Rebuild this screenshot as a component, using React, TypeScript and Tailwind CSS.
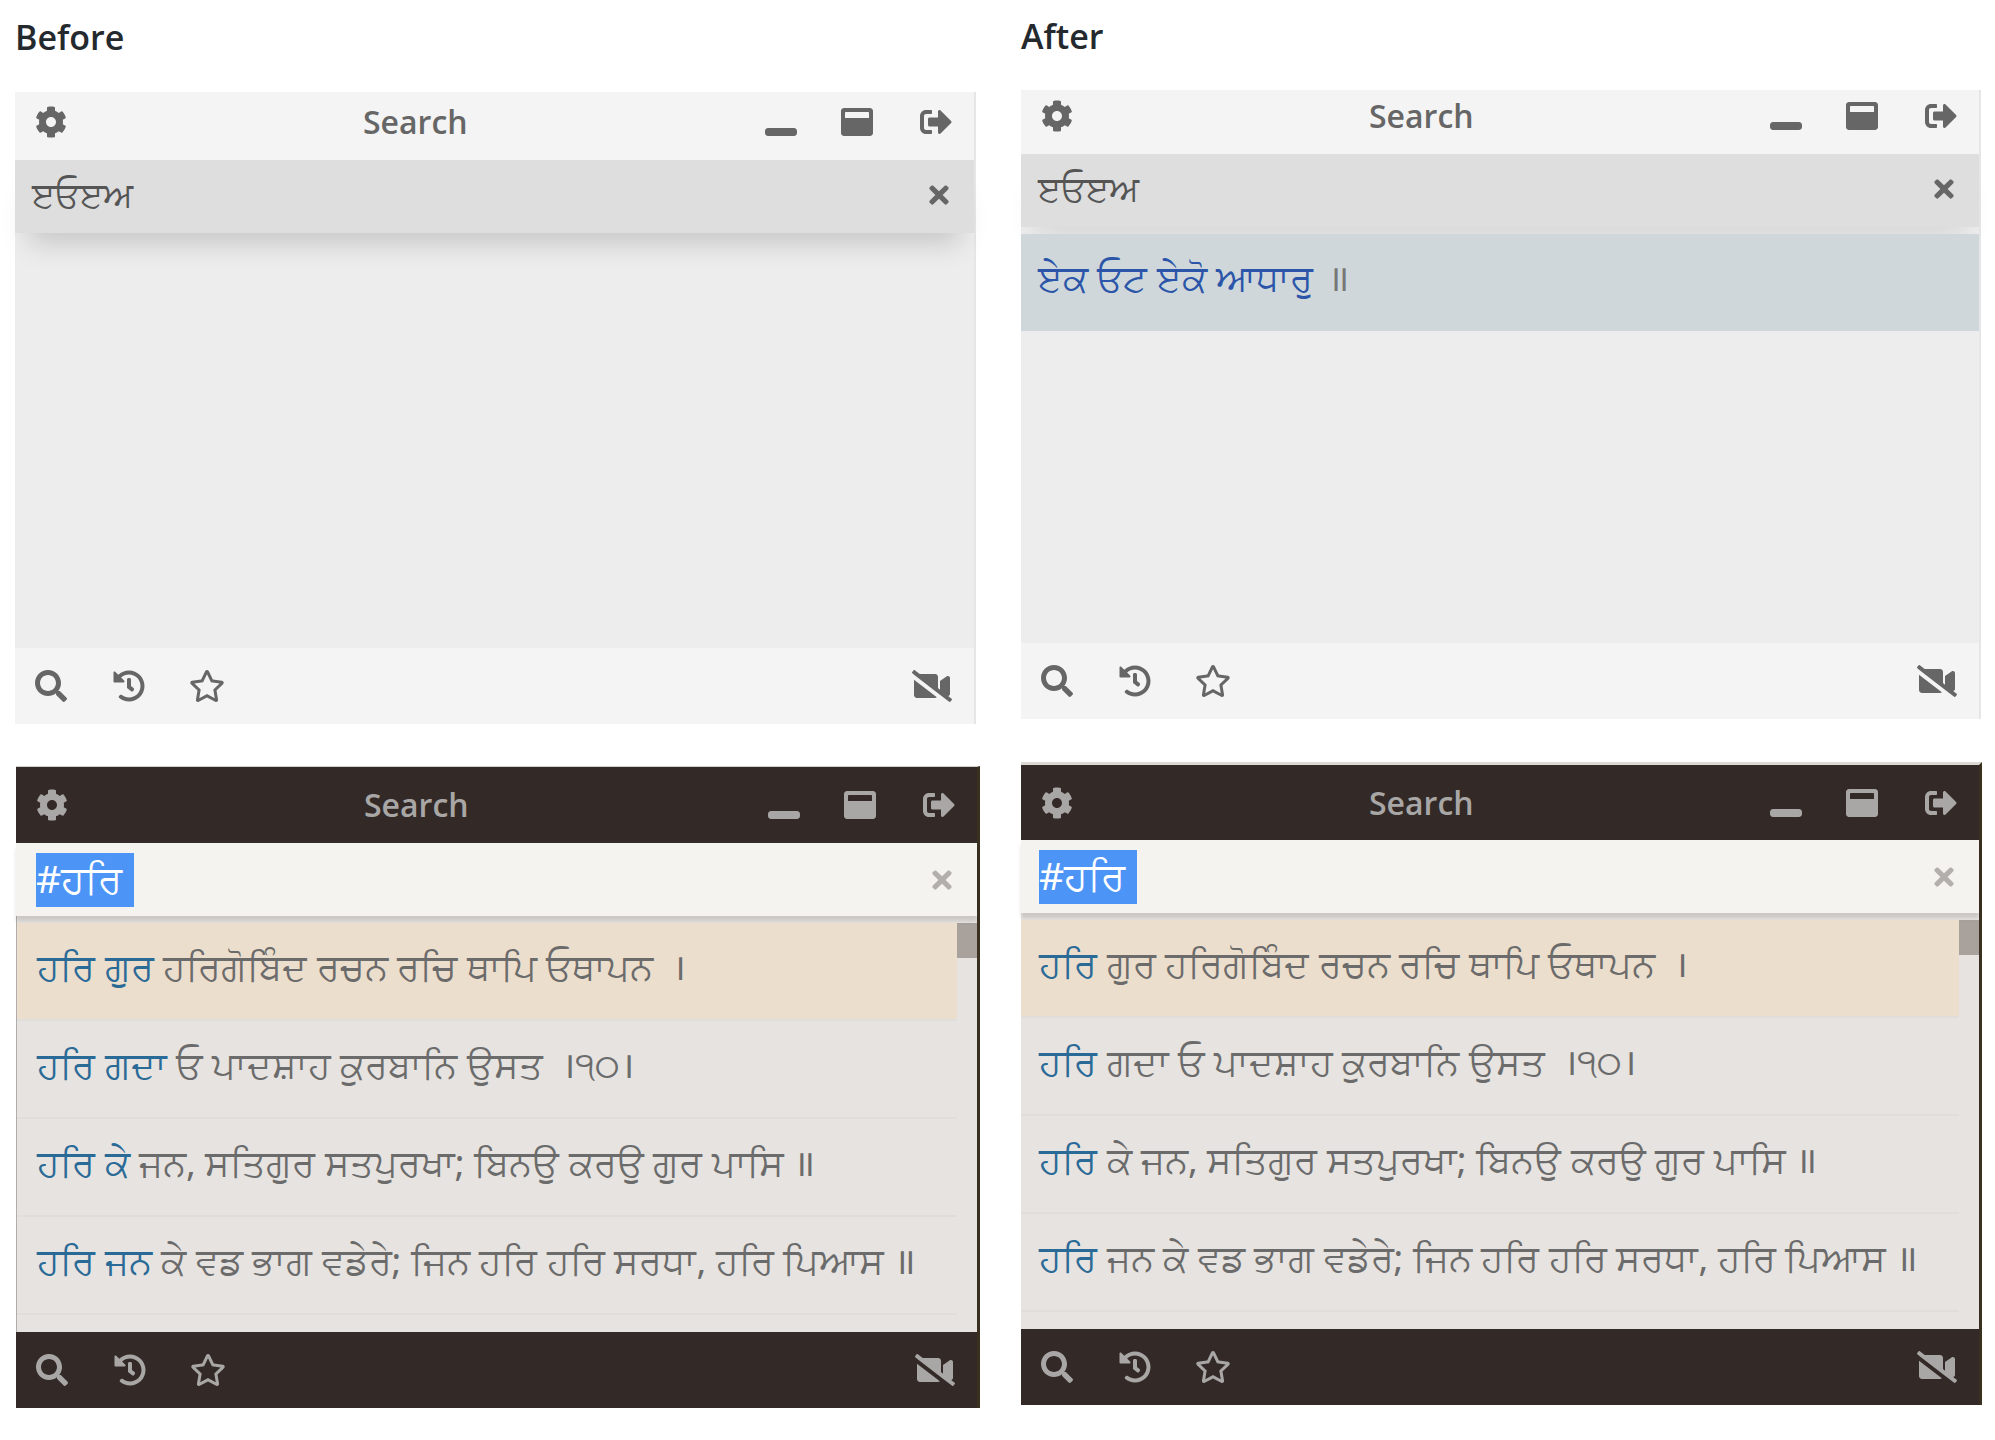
import { ReactNode } from "react";
import {
  FaCog,
  FaWindowMinimize,
  FaWindowMaximize,
  FaSignOutAlt,
  FaTimes,
  FaSearch,
  FaHistory,
  FaRegStar,
  FaVideoSlash,
} from "react-icons/fa";

const darkRows = [
  { hitBefore: "ਹਰਿ ਗੁਰ", hitAfter: "ਹਰਿ", word: " ਗੁਰ", rest: " ਹਰਿਗੋਬਿੰਦ ਰਚਨ ਰਚਿ ਥਾਪਿ ਓਥਾਪਨ  ।" },
  { hitBefore: "ਹਰਿ ਗਦਾ", hitAfter: "ਹਰਿ", word: " ਗਦਾ", rest: " ਓ ਪਾਦਸ਼ਾਹ ਕੁਰਬਾਨਿ ਉਸਤ  ।੧੦।" },
  { hitBefore: "ਹਰਿ ਕੇ", hitAfter: "ਹਰਿ", word: " ਕੇ", rest: " ਜਨ, ਸਤਿਗੁਰ ਸਤਪੁਰਖਾ; ਬਿਨਉ ਕਰਉ ਗੁਰ ਪਾਸਿ ॥" },
  { hitBefore: "ਹਰਿ ਜਨ", hitAfter: "ਹਰਿ", word: " ਜਨ", rest: " ਕੇ ਵਡ ਭਾਗ ਵਡੇਰੇ; ਜਿਨ ਹਰਿ ਹਰਿ ਸਰਧਾ, ਹਰਿ ਪਿਆਸ ॥" },
];

function Bar({ className, children }: { className: string; children: ReactNode }) {
  return <div className={`flex items-center pl-5 pr-[22px] ${className}`}>{children}</div>;
}

function TitleBar({ height, tone }: { height: string; tone: string }) {
  return (
    <Bar className={`${height} ${tone}`}>
      <FaCog className="w-8 h-8" />
      <span className="ml-[296px] text-[32px] leading-none font-semibold font-['Open_Sans',sans-serif]">Search</span>
      <div className="ml-auto flex items-center gap-11">
        <FaWindowMinimize className="w-8 h-8" />
        <FaWindowMaximize className="w-8 h-8" />
        <FaSignOutAlt className="w-8 h-8 ml-[3px]" />
      </div>
    </Bar>
  );
}

function FootBar({ dark }: { dark?: boolean }) {
  return (
    <Bar className={`h-[76px] ${dark ? "bg-[#332a28] text-[#a9a7a6]" : "bg-[#f4f4f4] text-[#666666]"}`}>
      <div className="flex items-center gap-[46px]">
        <FaSearch className="w-8 h-8" />
        <FaHistory className="w-8 h-8" />
        <FaRegStar className="w-9 h-8 -ml-[2px]" />
      </div>
      <FaVideoSlash className="ml-auto w-10 h-8" />
    </Bar>
  );
}

function LightPanel({ after }: { after?: boolean }) {
  return (
    <div className={`flex flex-col border-r-2 border-[#e6e6e6] ${after ? "w-[960px]" : "w-[961px]"}`}>
      <TitleBar
        height={after ? "h-[64px]" : "h-[68px]"}
        tone={after ? "bg-[#f4f4f4] text-[#666666] pb-[12px]" : "bg-[#f4f4f4] text-[#666666] pb-[9px]"}
      />
      <div
        className={`relative z-10 h-[73px] bg-[#dedede] flex items-center justify-between pl-[17px] pr-[22px] pb-[3px] text-[#555555] ${after ? "shadow-[0_24px_28px_-14px_rgba(0,0,0,0.1)]" : "shadow-[0_24px_28px_-14px_rgba(0,0,0,0.17)]"}`}
      >
        <span className="mb-[3px] text-[34.5px] leading-[50px] font-['Noto_Sans',sans-serif]">ੲਓੲਅ</span>
        <FaTimes className="w-[26px] h-7 text-[#666666]" />
      </div>
      <div className={`${after ? "h-[416px]" : "h-[415px]"} bg-[#ededed] pt-[7px]`}>
        {after && (
          <div className="relative z-20 h-[97px] bg-[#cfd7db] flex items-center pl-[17px] pb-[10px] text-[36.5px] text-[#2a55a8] font-['Noto_Sans',sans-serif]">
            ਏਕ ਓਟ ਏਕੋ ਆਧਾਰੁ <span className="ml-[14px] text-[#777777]">॥</span>
          </div>
        )}
      </div>
      <FootBar />
    </div>
  );
}

function DarkPanel({ after }: { after?: boolean }) {
  return (
    <div
      className={`flex flex-col border-r-[3px] border-[#3a3020] ${after ? "w-[961px] border-t-[3px] border-t-[#dcd9d5]" : "w-[964px] ml-px border-t border-t-[#cfcfcf]"}`}
    >
      <TitleBar height={after ? "h-[75px]" : "h-[76px]"} tone="bg-[#332a28] text-[#a9a7a6]" />
      <div
        className={`relative z-10 h-[73px] bg-[#f5f3ef] flex items-center justify-between pr-[22px] text-[#b2afad] shadow-[0_5px_4px_0_rgba(0,0,0,0.12)] ${after ? "pl-[18px]" : "pl-5"}`}
      >
        <span className="bg-[#4d94f7] text-white text-[39px] leading-[50px] h-[54px] w-[98px] font-['Noto_Sans',sans-serif]">#ਹਰਿ</span>
        <FaTimes className="w-[26px] h-7" />
      </div>
      <div
        className={`relative h-[416px] overflow-hidden bg-[#e6e3e0] pt-[7px] pr-5 ${after ? "" : "border-l border-[#b0aeac]"}`}
      >
        <div className="absolute top-[7px] right-0 w-5 h-[35px] bg-[#a8a19c]" />
        {darkRows.map((row, i) => (
          <div
            key={row.rest}
            className={`relative z-20 h-[98px] flex items-center pb-[10px] text-[36.6px] whitespace-pre text-[#6b6b6b] border-b-2 border-[#e0dedb] font-['Noto_Sans',sans-serif] ${after ? "pl-[18px]" : "pl-5"} ${i === 0 ? "bg-[#ecdecd]" : ""}`}
          >
            {after ? (
              <>
                <span className="text-[#2a6a97] font-medium">{row.hitAfter}</span>
                {row.word}
                {row.rest}
              </>
            ) : (
              <>
                <span className="text-[#2a6a97] font-medium">{row.hitBefore}</span>
                {row.rest}
              </>
            )}
          </div>
        ))}
      </div>
      <FootBar dark />
    </div>
  );
}

export default function App() {
  return (
    <div className="w-[1995px] h-[1440px] bg-white grid grid-cols-[965px_961px] gap-x-[41px] pl-[15px] overflow-hidden">
      <div className="flex flex-col">
        <h2 className="mt-[15px] h-[77px] text-[34px] leading-[44px] font-semibold text-[#24292e] font-['Open_Sans',sans-serif]">Before</h2>
        <LightPanel />
        <div className="mt-[42px]">
          <DarkPanel />
        </div>
      </div>
      <div className="flex flex-col">
        <h2 className="mt-[14px] h-[76px] text-[34px] leading-[44px] font-semibold text-[#24292e] font-['Open_Sans',sans-serif]">After</h2>
        <LightPanel after />
        <div className="mt-[43px]">
          <DarkPanel after />
        </div>
      </div>
    </div>
  );
}
